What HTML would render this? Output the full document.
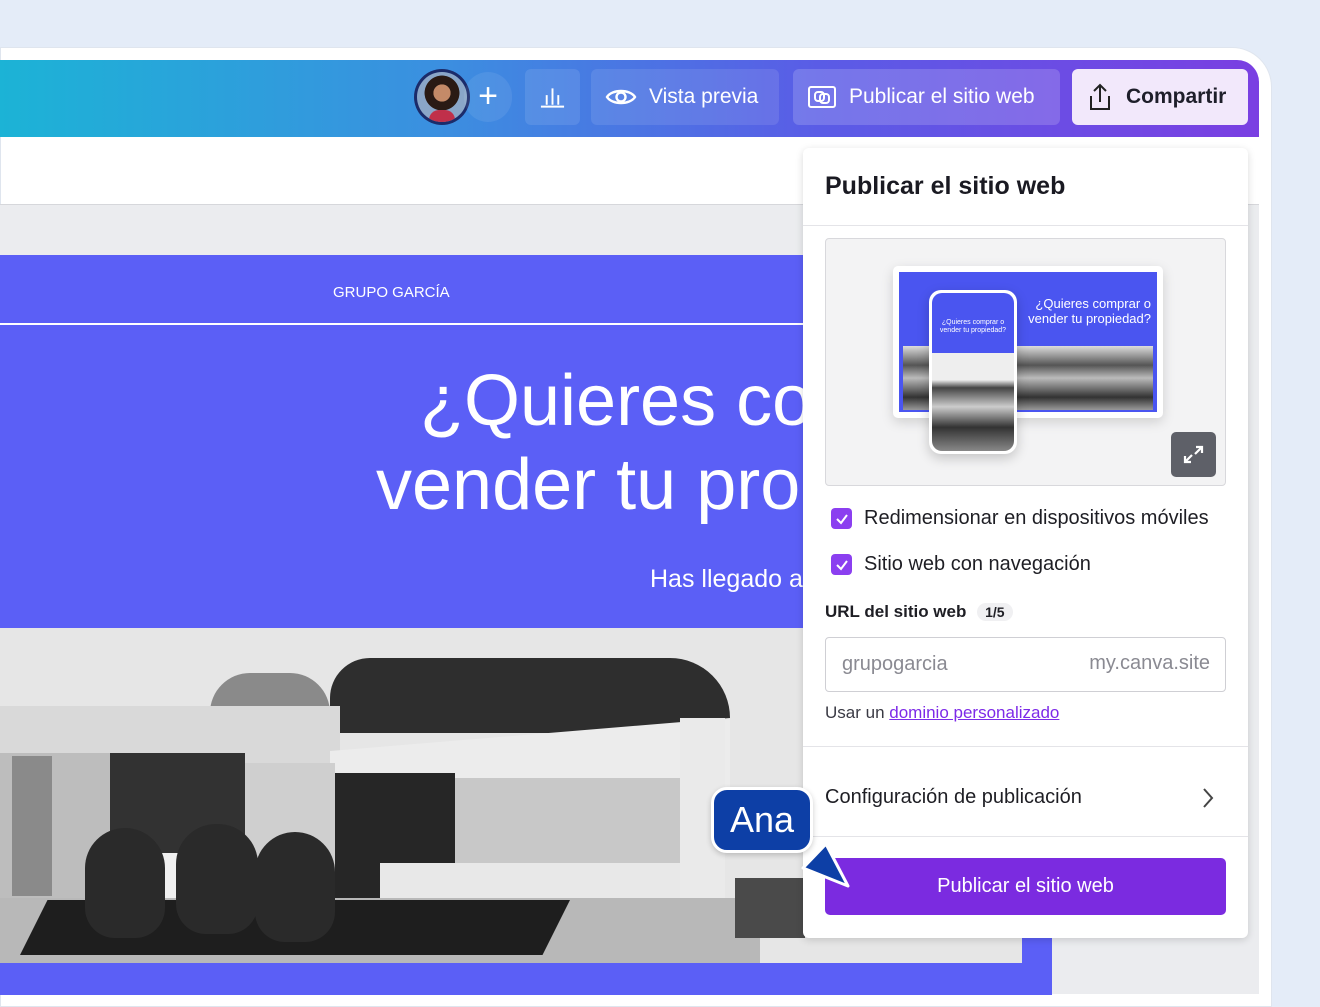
<!DOCTYPE html>
<html><head><meta charset="utf-8"><style>
*{margin:0;padding:0;box-sizing:border-box}
body{width:1320px;height:990px;overflow:hidden;background:#e4ecf8;font-family:"Liberation Sans","DejaVu Sans",sans-serif;position:relative}
.abs{position:absolute}
.frame{left:0;top:47px;width:1272px;height:960px;background:#fff;border-top-right-radius:40px;border:1px solid #dfe5ee}
.top{left:0;top:60px;width:1259px;height:77px;background:linear-gradient(90deg,#1cb3d6 0%,#3b8fe0 35%,#5a5ce6 65%,#7a3fe2 100%);border-top-right-radius:22px}
.btn{top:69px;height:56px;border-radius:6px;background:rgba(255,255,255,.1);color:#fff;font-size:21px;display:flex;align-items:center;gap:12px;padding:0 14px}
.panel{left:803px;top:148px;width:445px;height:790px;background:#fff;border-radius:6px;box-shadow:0 2px 8px rgba(0,0,0,.15)}
.cb{width:21px;height:21px;border-radius:4px;background:#8b3ff0;display:inline-flex;align-items:center;justify-content:center}
.ph{position:absolute}
</style></head><body>
<div class="abs frame"></div>
<div class="abs top"></div>
<div class="abs" style="left:414px;top:69px;width:56px;height:56px;border-radius:50%;background:#1b2b6a;padding:3px">
 <div style="width:100%;height:100%;border-radius:50%;background:radial-gradient(circle at 50% 42%,#c48a68 0 22%,#2a1a14 23% 45%,#8aa6c8 46%);overflow:hidden;position:relative"><div style="position:absolute;bottom:0;left:12px;width:26px;height:12px;background:#c0304a;border-radius:10px 10px 0 0"></div></div>
</div>
<div class="abs" style="left:464px;top:72px;width:48px;height:50px;border-radius:25px;background:rgba(255,255,255,.08);color:#fff;font-size:34px;line-height:48px;text-align:center;font-weight:300">+</div>
<div class="abs btn" style="left:525px;width:55px;justify-content:center">
<svg width="28" height="24" viewBox="0 0 28 24" fill="none" stroke="#fff" stroke-width="2"><path d="M2 22H26M8 20V10M14 20V3M20 20V10"/></svg></div>
<div class="abs btn" style="left:591px;width:188px">
<svg width="32" height="22" viewBox="0 0 32 22" fill="none" stroke="#fff" stroke-width="2.4"><path d="M2 11C7 3 25 3 30 11C25 19 7 19 2 11Z"/><circle cx="16" cy="11" r="4.5"/></svg>Vista previa</div>
<div class="abs btn" style="left:793px;width:267px;background:rgba(255,255,255,.17)">
<svg width="30" height="24" viewBox="0 0 30 24" fill="none" stroke="#fff" stroke-width="2"><rect x="2" y="2" width="26" height="20" rx="2"/><rect x="8" y="7" width="9" height="9" rx="3"/><rect x="13" y="9" width="9" height="9" rx="3"/></svg>Publicar el sitio web</div>
<div class="abs btn" style="left:1072px;width:176px;background:#f2e8fb;color:#1e1e2a;font-weight:600">
<svg width="28" height="30" viewBox="0 0 28 30" fill="none" stroke="#222" stroke-width="2"><path d="M14 20V3M8 9L14 3L20 9M5 14V27H23V14"/></svg>Compartir</div>
<div class="abs" style="left:0;top:204px;width:1259px;height:790px;background:#ebecef;border-top:1px solid #d6d7db"></div>
<div class="abs" style="left:0;top:255px;width:1052px;height:740px;background:#5b5ff6"></div>
<div class="abs" style="left:333px;top:284px;color:#fff;font-size:15px">GRUPO GARCÍA</div>
<div class="abs" style="left:0;top:323px;width:810px;height:2px;background:#fff"></div>
<div class="abs" style="left:420px;top:360px;color:#fff;font-size:72px;white-space:nowrap">¿Quieres co</div>
<div class="abs" style="left:376px;top:444px;color:#fff;font-size:72px;white-space:nowrap">vender tu pro</div>
<div class="abs" style="left:650px;top:565px;color:#fff;font-size:25px;white-space:nowrap">Has llegado a</div>
<!-- photo -->
<div class="abs" style="left:0;top:628px;width:1022px;height:335px;background:#e6e6e6;overflow:hidden">
 <div class="ph" style="left:330px;top:30px;width:400px;height:75px;background:#2e2e2e;border-radius:40px 60px 0 0"></div>
 <div class="ph" style="left:210px;top:45px;width:120px;height:60px;background:#8a8a8a;border-radius:40px 40px 0 0"></div>
 <div class="ph" style="left:0;top:78px;width:340px;height:135px;background:#d9d9d9"></div>
 <div class="ph" style="left:330px;top:90px;width:400px;height:110px;background:#ececec;clip-path:polygon(0 30%,100% 0,100% 100%,0 100%)"></div>
 <div class="ph" style="left:680px;top:90px;width:45px;height:230px;background:#eaeaea"></div>
 <div class="ph" style="left:0;top:125px;width:120px;height:150px;background:#bdbdbd"></div>
 <div class="ph" style="left:12px;top:128px;width:40px;height:140px;background:#8a8a8a"></div>
 <div class="ph" style="left:110px;top:125px;width:135px;height:160px;background:#323232"></div>
 <div class="ph" style="left:245px;top:135px;width:90px;height:150px;background:#cfcfcf"></div>
 <div class="ph" style="left:335px;top:145px;width:120px;height:160px;background:#262626"></div>
 <div class="ph" style="left:455px;top:150px;width:225px;height:155px;background:#c8c8c8"></div>
 <div class="ph" style="left:380px;top:235px;width:300px;height:60px;background:#e8e8e8"></div>
 <div class="ph" style="left:130px;top:225px;width:125px;height:45px;background:#f0f0f0"></div>
 <div class="ph" style="left:0;top:270px;width:760px;height:65px;background:#b8b8b8"></div>
 <div class="ph" style="left:20px;top:272px;width:550px;height:55px;background:#1e1e1e;clip-path:polygon(5% 0,100% 0,95% 100%,0 100%)"></div>
 <div class="ph" style="left:85px;top:200px;width:80px;height:110px;background:#2a2a2a;border-radius:40px 40px 30px 30px"></div>
 <div class="ph" style="left:176px;top:196px;width:82px;height:110px;background:#2a2a2a;border-radius:40px 40px 30px 30px"></div>
 <div class="ph" style="left:255px;top:204px;width:80px;height:110px;background:#2a2a2a;border-radius:40px 40px 30px 30px"></div>
 <div class="ph" style="left:735px;top:250px;width:70px;height:60px;background:#4a4a4a"></div>
</div>
<div class="abs panel">
 <div style="position:absolute;left:22px;top:24px;font-size:25px;font-weight:700;color:#1a1a22">Publicar el sitio web</div>
 <div style="position:absolute;left:0;top:77px;width:100%;height:1px;background:#e4e4e8"></div>
 <div style="position:absolute;left:22px;top:90px;width:401px;height:248px;background:#f3f3f4;border:1px solid #d8d8dc;border-radius:4px">
  <div style="position:absolute;left:67px;top:27px;width:270px;height:152px;background:#fff;border-radius:5px;box-shadow:0 4px 12px rgba(0,0,0,.15)">
   <div style="position:absolute;left:6px;top:6px;width:258px;height:140px;background:#4a55f0">
    <div style="position:absolute;left:128px;top:24px;color:#fff;font-size:13px;line-height:15px;text-align:right;width:124px">¿Quieres comprar o vender tu propiedad?</div>
    <div style="position:absolute;left:4px;top:74px;width:250px;height:64px;background:linear-gradient(180deg,#ddd 0%,#555 30%,#bbb 50%,#333 80%,#999)"></div>
   </div>
  </div>
  <div style="position:absolute;left:103px;top:51px;width:88px;height:164px;background:#fff;border-radius:12px;box-shadow:0 4px 12px rgba(0,0,0,.2);padding:3px">
   <div style="width:100%;height:100%;border-radius:10px;overflow:hidden;background:linear-gradient(180deg,#4a55f0 0 38%,#eee 38% 55%,#444 60%,#ccc 72%,#333 85%,#888)"><div style="color:#fff;font-size:7px;text-align:center;padding-top:26px;line-height:8px">¿Quieres comprar o vender tu propiedad?</div></div>
  </div>
  <div style="position:absolute;left:345px;top:193px;width:45px;height:45px;background:#5e6068;border-radius:5px">
   <svg width="45" height="45" viewBox="0 0 45 45" fill="none" stroke="#fff" stroke-width="2.2"><path d="M25 15H31V21M31 15L24 22M14 24V30H20M14 30L21 23"/></svg></div>
 </div>
 <div style="position:absolute;left:28px;top:359px;display:flex;align-items:center;gap:12px;font-size:20px;color:#1e1e24"><span class="cb"><svg width="14" height="14" viewBox="0 0 14 14" fill="none" stroke="#fff" stroke-width="2"><path d="M2 7L6 11L12 3"/></svg></span>Redimensionar en dispositivos móviles</div>
 <div style="position:absolute;left:28px;top:405px;display:flex;align-items:center;gap:12px;font-size:20px;color:#1e1e24"><span class="cb"><svg width="14" height="14" viewBox="0 0 14 14" fill="none" stroke="#fff" stroke-width="2"><path d="M2 7L6 11L12 3"/></svg></span>Sitio web con navegación</div>
 <div style="position:absolute;left:22px;top:454px;font-size:17px;font-weight:600;color:#1e1e24">URL del sitio web <span style="display:inline-block;margin-left:6px;background:#f0f0f2;border-radius:10px;padding:1px 8px;font-size:14px">1/5</span></div>
 <div style="position:absolute;left:22px;top:489px;width:401px;height:55px;border:1.5px solid #cfcfd4;border-radius:4px;font-size:20px;color:#8a8a92">
  <span style="position:absolute;left:16px;top:15px">grupogarcia</span><span style="position:absolute;right:15px;top:14px">my.canva.site</span></div>
 <div style="position:absolute;left:22px;top:555px;font-size:17px;color:#3a3a44">Usar un <span style="color:#7d2ae8;text-decoration:underline">dominio personalizado</span></div>
 <div style="position:absolute;left:0;top:598px;width:100%;height:1px;background:#e4e4e8"></div>
 <div style="position:absolute;left:22px;top:638px;font-size:20px;color:#1e1e24">Configuración de publicación</div>
 <svg style="position:absolute;left:398px;top:638px" width="14" height="24" viewBox="0 0 14 24" fill="none" stroke="#444" stroke-width="2"><path d="M3 3L11 12L3 21"/></svg>
 <div style="position:absolute;left:0;top:688px;width:100%;height:1px;background:#e4e4e8"></div>
 <div style="position:absolute;left:22px;top:710px;width:401px;height:57px;background:#7b2be0;border-radius:5px;color:#fff;font-size:20px;text-align:center;line-height:57px">Publicar el sitio web</div>
</div>
<div class="abs" style="left:711px;top:787px;width:102px;height:66px;background:#0d3fa6;border:3px solid #fff;border-radius:16px;color:#fff;font-size:36px;text-align:center;line-height:60px;box-shadow:0 2px 6px rgba(0,0,0,.2)">Ana</div>
<svg class="abs" style="left:798px;top:838px" width="60" height="56" viewBox="0 0 60 56"><path d="M28 6L50 48L5 30Z" fill="#0d3fa6" stroke="#fff" stroke-width="3" stroke-linejoin="round"/></svg>
</body></html>
